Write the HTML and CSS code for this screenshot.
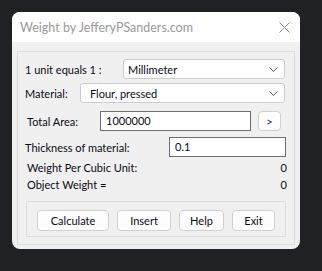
FILE: index.html
```html
<!DOCTYPE html>
<html lang="en">
<head>
    <meta charset="UTF-8">
    <meta name="viewport" content="width=device-width, initial-scale=1.0">
    <title>Weight</title>
    <link rel="stylesheet" href="styles.css">
</head>
<body>
    <div class="window">
        <div class="titlebar">
            <span class="title">Weight by JefferyPSanders.com</span>
            <svg class="close" width="11" height="11" viewBox="0 0 11 11">
                <path d="M0.5 0.5 L10.5 10.5 M10.5 0.5 L0.5 10.5" stroke="#8a8a8a" stroke-width="1" fill="none"/>
            </svg>
        </div>

        <div class="content">
            <div class="group">
                <div class="row row-unit">
                    <span class="label">1 unit equals 1 :</span>
                    <div class="select select-unit">
                        <span>Millimeter</span>
                        <svg width="9" height="5" viewBox="0 0 9 5"><path d="M0.5 0.5 L4.5 4.5 L8.5 0.5" stroke="#555" fill="none"/></svg>
                    </div>
                </div>

                <div class="row row-material">
                    <span class="label">Material:</span>
                    <div class="select select-material">
                        <span>Flour, pressed</span>
                        <svg width="9" height="5" viewBox="0 0 9 5"><path d="M0.5 0.5 L4.5 4.5 L8.5 0.5" stroke="#555" fill="none"/></svg>
                    </div>
                </div>

                <div class="row row-area">
                    <span class="label">Total Area:</span>
                    <div class="input input-area">1000000</div>
                    <button class="btn btn-small">&gt;</button>
                </div>

                <div class="row row-thick">
                    <span class="label">Thickness of material:</span>
                    <div class="input input-thick">0.1</div>
                </div>

                <div class="row row-result first">
                    <span class="label">Weight Per Cubic Unit:</span>
                    <span class="value">0</span>
                </div>
                <div class="row row-result">
                    <span class="label">Object Weight =</span>
                    <span class="value">0</span>
                </div>

                <div class="buttons">
                    <button class="btn btn-calc">Calculate</button>
                    <button class="btn btn-insert">Insert</button>
                    <button class="btn btn-help">Help</button>
                    <button class="btn btn-exit">Exit</button>
                </div>
            </div>
        </div>
    </div>
</body>
</html>
```

FILE: styles.css
```css
body {
    margin: 0;
    background: #202124;
    font-family: Lato, "Noto Sans", sans-serif;
    font-size: 11px;
    color: #0a0a14;
}

.window {
    margin: 12px 0 0 12px;
    width: 288px;
    height: 237px;
    border-radius: 8px;
    background: #f0f0f0;
    overflow: hidden;
}

.titlebar {
    height: 30px;
    background: #fff;
    display: flex;
    align-items: center;
    justify-content: space-between;
    padding: 0 10px 0 8px;
}

.title {
    color: #9a9a9a;
    font-size: 12.5px;
}

.content {
    padding: 9px 5px 4px 5px;
}

.group {
    height: 194px;
    box-sizing: border-box;
    border: 1px solid #dcdcdc;
}

.row {
    display: flex;
    align-items: center;
    padding-left: 7px;
}

.label {
    white-space: nowrap;
}

.select {
    box-sizing: border-box;
    height: 20px;
    background: #fff;
    border: 1px solid #cccccc;
    border-radius: 3px;
    display: flex;
    align-items: center;
    justify-content: space-between;
    padding: 0 6px 0 4px;
}

.row-unit {
    margin-top: 7px;
}

.row-unit .label {
    width: 98px;
}

.select-unit {
    width: 162px;
}

.row-material {
    margin-top: 4px;
}

.row-material .label {
    width: 55px;
}

.select-material {
    width: 205px;
    padding-left: 9px;
}

.input {
    box-sizing: border-box;
    height: 20px;
    background: #fff;
    border: 1px solid #6e6e6e;
    padding: 0 5px;
    line-height: 18px;
}

.row-area {
    margin-top: 8px;
    padding-left: 9px;
}

.row-area .label {
    width: 73px;
}

.input-area {
    width: 151px;
}

.btn {
    box-sizing: border-box;
    height: 21px;
    background: #fdfdfd;
    border: 1px solid #d0d0d0;
    border-radius: 4px;
    font-family: inherit;
    font-size: 11px;
    color: #0a0a14;
    padding: 0;
}

.btn-small {
    width: 23px;
    height: 20px;
    margin-left: 7px;
    color: #1b1b7a;
}

.row-thick {
    margin-top: 6px;
}

.row-thick .label {
    width: 144px;
}

.input-thick {
    width: 117px;
}

.row-result {
    height: 16px;
    padding-left: 9px;
    width: 260px;
    justify-content: space-between;
}

.row-result.first {
    margin-top: 2px;
}

.row-result + .row-result {
    margin-top: 1px;
}

.buttons {
    box-sizing: border-box;
    margin: 9px 0 0 8px;
    width: 260px;
    height: 36px;
    border: 1px solid #dcdcdc;
    display: flex;
    gap: 8px;
    padding: 8px 0 0 10px;
}

.btn-calc {
    width: 72px;
}

.btn-insert {
    width: 54px;
}

.btn-help {
    width: 45px;
}

.btn-exit {
    width: 43px;
}
```
